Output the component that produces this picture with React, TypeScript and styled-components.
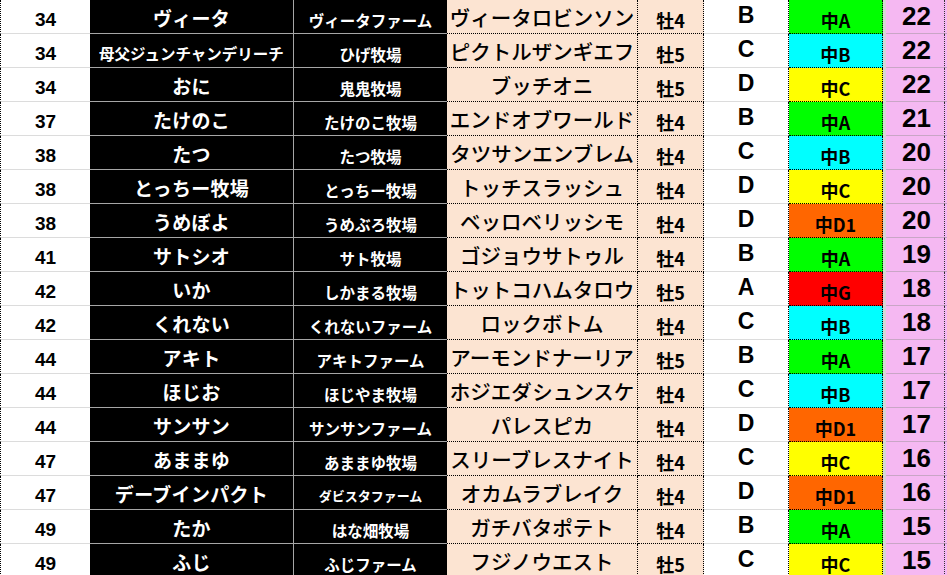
import React from "react";
import styled, { createGlobalStyle } from "styled-components";

const Global = createGlobalStyle`
  html, body { margin: 0; padding: 0; background: #ffffff; overflow: hidden; }
  body { width: 947px; height: 575px; }
`;

const JP = `"Noto Sans CJK JP", "Noto Sans", sans-serif`;
const LAT = `"Liberation Sans", Arial, sans-serif`;

type Kind = "A" | "B" | "C" | "D1" | "G";

const typeColors: Record<Kind, string> = {
  A: "#00ff00",
  B: "#00ffff",
  C: "#ffff00",
  D1: "#ff6600",
  G: "#ff0000",
};

interface RowData {
  rank: number;
  owner: string;
  ranch: string;
  horse: string;
  sex: string;
  grade: string;
  kind: Kind;
  score: number;
}

const rows: RowData[] = [
  { rank: 34, owner: "ヴィータ", ranch: "ヴィータファーム", horse: "ヴィータロビンソン", sex: "牡4", grade: "B", kind: "A", score: 22 },
  { rank: 34, owner: "母父ジュンチャンデリーチ", ranch: "ひげ牧場", horse: "ピクトルザンギエフ", sex: "牡5", grade: "C", kind: "B", score: 22 },
  { rank: 34, owner: "おに", ranch: "鬼鬼牧場", horse: "ブッチオニ", sex: "牡5", grade: "D", kind: "C", score: 22 },
  { rank: 37, owner: "たけのこ", ranch: "たけのこ牧場", horse: "エンドオブワールド", sex: "牡4", grade: "B", kind: "A", score: 21 },
  { rank: 38, owner: "たつ", ranch: "たつ牧場", horse: "タツサンエンブレム", sex: "牡4", grade: "C", kind: "B", score: 20 },
  { rank: 38, owner: "とっちー牧場", ranch: "とっちー牧場", horse: "トッチスラッシュ", sex: "牡4", grade: "D", kind: "C", score: 20 },
  { rank: 38, owner: "うめぼよ", ranch: "うめぶろ牧場", horse: "ベッロベリッシモ", sex: "牡4", grade: "D", kind: "D1", score: 20 },
  { rank: 41, owner: "サトシオ", ranch: "サト牧場", horse: "ゴジョウサトゥル", sex: "牡4", grade: "B", kind: "A", score: 19 },
  { rank: 42, owner: "いか", ranch: "しかまる牧場", horse: "トットコハムタロウ", sex: "牡5", grade: "A", kind: "G", score: 18 },
  { rank: 42, owner: "くれない", ranch: "くれないファーム", horse: "ロックボトム", sex: "牡4", grade: "C", kind: "B", score: 18 },
  { rank: 44, owner: "アキト", ranch: "アキトファーム", horse: "アーモンドナーリア", sex: "牡5", grade: "B", kind: "A", score: 17 },
  { rank: 44, owner: "ほじお", ranch: "ほじやま牧場", horse: "ホジエダシュンスケ", sex: "牡4", grade: "C", kind: "B", score: 17 },
  { rank: 44, owner: "サンサン", ranch: "サンサンファーム", horse: "パレスピカ", sex: "牡4", grade: "D", kind: "D1", score: 17 },
  { rank: 47, owner: "あままゆ", ranch: "あままゆ牧場", horse: "スリーブレスナイト", sex: "牡4", grade: "C", kind: "C", score: 16 },
  { rank: 47, owner: "デーブインパクト", ranch: "ダビスタファーム", horse: "オカムラブレイク", sex: "牡4", grade: "D", kind: "D1", score: 16 },
  { rank: 49, owner: "たか", ranch: "はな畑牧場", horse: "ガチバタポテト", sex: "牡4", grade: "B", kind: "A", score: 15 },
  { rank: 49, owner: "ふじ", ranch: "ふじファーム", horse: "フジノウエスト", sex: "牡5", grade: "C", kind: "C", score: 15 },
];

const Sheet = styled.div`
  display: flex;
  flex-direction: column;
  width: 947px;
`;

const Row = styled.div`
  display: flex;
  height: 34px;
  flex: 0 0 34px;
`;

const Cell = styled.div`
  box-sizing: border-box;
  height: 34px;
  display: flex;
  align-items: flex-end;
  justify-content: center;
  white-space: nowrap;
  overflow: hidden;
`;

const RankCell = styled(Cell)`
  width: 90px;
  background: #ffffff;
  border-left: 1px dotted #000;
  border-bottom: 1px solid #dcdcdc;
  color: #000;
  font-family: ${LAT};
  font-weight: 700;
  font-size: 19px;
  line-height: 21px;
  padding-bottom: 3px;
`;

const OwnerCell = styled(Cell)<{ $small?: boolean }>`
  width: 204px;
  background: #000;
  border-right: 1px solid #a6a6a6;
  border-bottom: 1px solid #a6a6a6;
  color: #fff;
  font-family: ${JP};
  font-weight: 700;
  font-size: ${(p) => (p.$small ? "15.5px" : "19px")};
  letter-spacing: ${(p) => (p.$small ? "0" : "0.3px")};
  line-height: 22px;
  padding-bottom: ${(p) => (p.$small ? "3px" : "4px")};
`;

const RanchCell = styled(Cell)<{ $small?: boolean }>`
  width: 153px;
  background: #000;
  border-bottom: 1px solid #a6a6a6;
  color: #fff;
  font-family: ${JP};
  font-weight: 700;
  font-size: ${(p) => (p.$small ? "13px" : "15.5px")};
  line-height: 20px;
  padding-bottom: 3px;
`;

const HorseCell = styled(Cell)`
  width: 191px;
  background: #fce4d2;
  border-right: 1px dotted #000;
  border-bottom: 1px dotted #000;
  color: #000;
  font-family: ${JP};
  font-weight: 500;
  font-size: 20.5px;
  line-height: 24px;
  padding-bottom: 4px;
`;

const SexCell = styled(Cell)`
  width: 66px;
  background: #fce4d2;
  border-right: 1px dotted #000;
  border-bottom: 1px dotted #000;
  color: #000;
  font-family: ${JP};
  font-weight: 700;
  font-size: 18px;
  line-height: 20px;
  padding-bottom: 3px;
`;

const GradeCell = styled(Cell)`
  width: 85px;
  background: #ffffff;
  border-right: 1px dotted #000;
  border-bottom: 1px solid #dcdcdc;
  color: #000;
  font-family: ${LAT};
  font-weight: 700;
  font-size: 23px;
  line-height: 26px;
  padding-bottom: 5px;
`;

const TypeCell = styled(Cell)<{ $bg: string }>`
  width: 94px;
  background: ${(p) => p.$bg};
  border-right: 1px dotted #000;
  border-bottom: 1px dotted #000;
  color: #000;
  font-family: ${JP};
  font-weight: 700;
  font-size: 18px;
  line-height: 20px;
  padding-bottom: 3px;
`;

const Gap = styled.div`
  box-sizing: border-box;
  width: 3px;
  height: 34px;
  background: #d6d6d6;
`;

const ScoreCell = styled(Cell)`
  width: 59px;
  background: #f5b8f2;
  border-right: 1px dotted #333;
  border-bottom: 1px solid #c9a6c6;
  color: #000;
  font-family: ${LAT};
  font-weight: 700;
  font-size: 26px;
  line-height: 28px;
  padding-bottom: 3px;
  padding-left: 3px;
`;

const Tail = styled.div`
  box-sizing: border-box;
  width: 2px;
  height: 34px;
  background: #f5b8f2;
  border-bottom: 1px solid #c9a6c6;
`;

export default function App() {
  return (
    <>
      <Global />
      <Sheet>
        {rows.map((r, i) => (
          <Row key={i}>
            <RankCell>{r.rank}</RankCell>
            <OwnerCell $small={r.owner.length > 9}>{r.owner}</OwnerCell>
            <RanchCell $small={r.ranch === "ダビスタファーム"}>{r.ranch}</RanchCell>
            <HorseCell>{r.horse}</HorseCell>
            <SexCell>{r.sex}</SexCell>
            <GradeCell>{r.grade}</GradeCell>
            <TypeCell $bg={typeColors[r.kind]}>中{r.kind}</TypeCell>
            <Gap />
            <ScoreCell>{r.score}</ScoreCell>
            <Tail />
          </Row>
        ))}
      </Sheet>
    </>
  );
}
